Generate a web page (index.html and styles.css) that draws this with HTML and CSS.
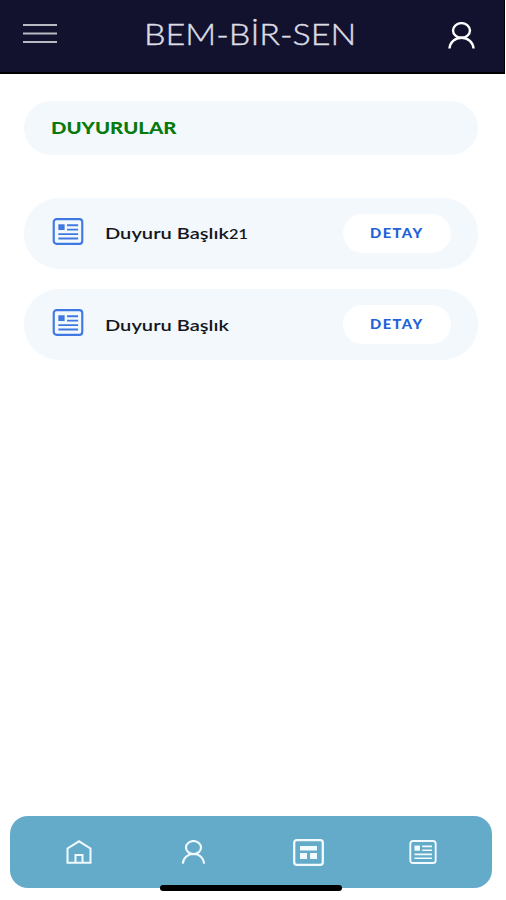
FILE: index.html
```
<!DOCTYPE html>
<html lang="tr">
<head>
    <meta charset="UTF-8">
    <meta name="viewport" content="width=device-width, initial-scale=1.0">
    <title>BEM-BİR-SEN</title>
    <link rel="stylesheet" href="styles.css">
</head>
<body>
<svg class="icon_defs" width="0" height="0">
  <symbol id="news" viewBox="0 0 32 28">
    <rect x="1.2" y="1.2" width="29.6" height="25.6" rx="3" fill="none" stroke="currentColor" stroke-width="2.2"/>
    <path d="M6 6.500h6.500v6H6z" fill="currentColor"/>
    <path d="M15 7.500h11.500M15 12h11.500M6 16.700h20.500M6 21.300h20.500" fill="none" stroke="currentColor" stroke-width="1.900"/>
  </symbol>
  <symbol id="user" viewBox="0 0 28 28">
    <ellipse cx="14" cy="8.800" rx="8.800" ry="7.600" fill="none" stroke="currentColor" stroke-width="2.500"/>
    <path d="M1.500 27.500C2 21 7 16.300 14 16.300s12 4.700 12.500 11.200" fill="none" stroke="currentColor" stroke-width="2.500"/>
  </symbol>
</svg>
<div class="container">
  <header class="header">
    <svg class="menu" viewBox="0 0 34 22"><path d="M0 2h34M0 10.500h34M0 19h34"/></svg>
    <h1 class="title"><span>BEM-BİR-SEN</span></h1>
    <svg class="profile"><use href="#user"/></svg>
  </header>
  <main class="page_content">
    <h2 class="section_title"><span>DUYURULAR</span></h2>
    <div class="list">
      <div class="card">
        <svg class="card_icon"><use href="#news"/></svg>
        <div class="card_text"><span>Duyuru Başlık<span class="num">21</span></span></div>
        <div class="button"><span>DETAY</span></div>
      </div>
      <div class="card">
        <svg class="card_icon"><use href="#news"/></svg>
        <div class="card_text"><span>Duyuru Başlık</span></div>
        <div class="button"><span>DETAY</span></div>
      </div>
    </div>
  </main>
  <nav class="tabs">
    <div class="tab">
      <svg class="tab_home" viewBox="0 0 26 24" fill="none" stroke="currentColor" stroke-width="2">
        <path d="M1.500 22.800V8.500L13 1.300l11.500 7.200v14.300z"/>
        <path d="M9.500 22.500v-7.500h7v7.500"/>
      </svg>
    </div>
    <div class="tab"><svg class="tab_user"><use href="#user"/></svg></div>
    <div class="tab">
      <svg class="tab_board" viewBox="0 0 31 27">
        <rect x="1.200" y="1.200" width="28.600" height="24.600" rx="2.500" fill="none" stroke="currentColor" stroke-width="2.300"/>
        <path d="M7 7h17v4.500H7zM7 14h7v6H7zM17 14h7v6h-7z" fill="currentColor"/>
      </svg>
    </div>
    <div class="tab"><svg class="tab_news"><use href="#news"/></svg></div>
    <div class="home_bar"></div>
  </nav>
</div>
</body>
</html>
```
FILE: styles.css
```
body, html {
  margin: 0;
  background: #fff;
}
* {
  box-sizing: border-box;
}
.icon_defs {
  display: none;
}
.container {
  display: flex;
  flex-direction: column;
  width: 506px;
  height: 900px;
  overflow: hidden;
  font-family: Lato, "Open Sans", sans-serif;
}
.header {
  display: flex;
  align-items: center;
  width: 505px;
  height: 74px;
  padding: 0 29px 2px 23px;
  background: #12122e;
  border-right: 1px solid #000;
  border-bottom: 2px solid #000;
}
.menu {
  width: 34px;
  height: 22px;
  margin-top: -3px;
  stroke: #b9b9c2;
  stroke-width: 2;
}
.title {
  flex: 1;
  margin: -3px 0 0 87px;
  color: #dcdce2;
  font-size: 29px;
  font-weight: 300;
  line-height: 36px;
  -webkit-text-stroke: 0.4px #dcdce2;
}
.title span, .section_title span, .card_text > span, .button span {
  display: inline-block;
  transform-origin: 0 50%;
  white-space: nowrap;
}
.title span {
  transform: scaleX(1.175);
}
.profile {
  width: 27px;
  height: 27px;
  color: #fff;
}
.page_content {
  flex: 1;
  padding: 27px 28px 0 24px;
}
.section_title {
  height: 54px;
  margin: 0;
  padding-left: 27px;
  border-radius: 27px;
  background: #f3f8fd;
  color: #087a0c;
  font-size: 17px;
  font-weight: 900;
  line-height: 53px;
}
.section_title span {
  transform: scaleX(1.195);
}
.list {
  display: grid;
  gap: 20px;
  margin-top: 43px;
}
.card {
  display: flex;
  align-items: center;
  height: 71px;
  padding: 0 27px 0 28px;
  border-radius: 35px;
  background: #f3f8fd;
}
.card_icon {
  width: 32px;
  height: 27px;
  margin-top: -5px;
  color: #3f78e0;
}
.card_text {
  flex: 1;
  margin-left: 21px;
  color: #15171c;
  font-size: 16px;
  font-weight: 600;
  line-height: 24px;
}
.card_text > span {
  transform: scaleX(1.255);
}
.num {
  font-size: 13px;
}
.button {
  width: 108px;
  height: 39px;
  padding-left: 27px;
  border-radius: 20px;
  background: #fff;
  color: #2161d8;
  font-size: 12.5px;
  font-weight: 900;
  letter-spacing: 1.2px;
  line-height: 39px;
}
.button span {
  transform: scaleX(1.18);
}
.tabs {
  position: relative;
  display: flex;
  justify-content: space-between;
  height: 72px;
  margin: 0 14px 12px 10px;
  padding: 0 53px;
  border-radius: 18px;
  background: #64aac9;
  color: #f1faff;
}
.tab {
  display: flex;
  align-items: center;
  justify-content: center;
  width: 32px;
}
.tab_home {
  width: 26px;
  height: 24px;
}
.tab_user {
  width: 25px;
  height: 24px;
  margin-bottom: 1px;
}
.tab_board {
  width: 31px;
  height: 27px;
}
.tab_news {
  width: 28px;
  height: 24px;
}
.home_bar {
  position: absolute;
  left: 150px;
  bottom: -3px;
  width: 182px;
  height: 6px;
  border-radius: 3px;
  background: #000;
}
```
